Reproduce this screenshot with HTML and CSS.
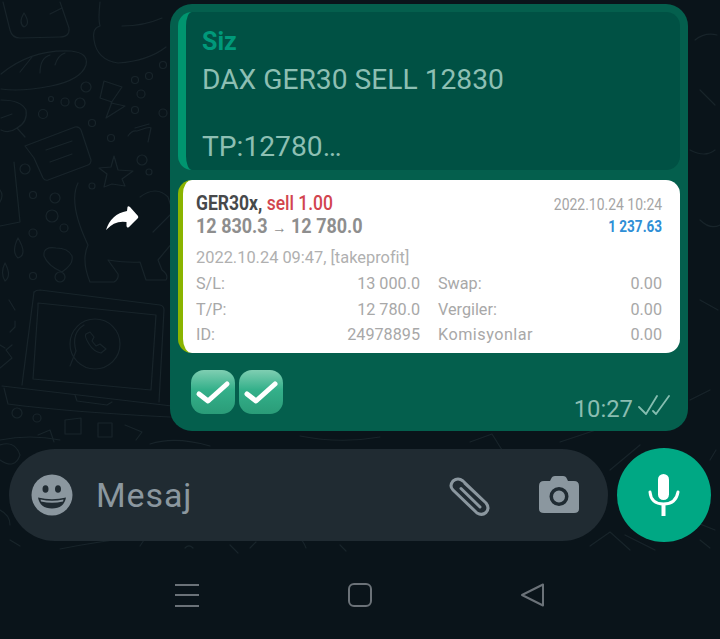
FILE: index.html
```html
<!DOCTYPE html>
<html lang="tr">
<head>
<meta charset="utf-8">
<title>Mesaj</title>
<link rel="stylesheet" href="styles.css">
</head>
<body>
<div class="screen">
  <svg class="doodles" width="720" height="560" viewBox="0 0 720 560" fill="none" stroke="#18242a" stroke-width="1.2" stroke-linecap="round" stroke-linejoin="round">
    <path d="M3 2l7 28q2 8 10 8l40-1q10 0 9-9L60 2"/><path d="M24 13q-6 10 0 14q7-3 0-14zM50 14l12-6"/>
    <path d="M100 2q-2 18 0 24q-8 2-6 14q3 20 24 23q30-2 48-16"/><path d="M122 26q22 0 40-8"/>
    <path d="M1 74q30-25 70-23q18 2 15 14q-5 15-35 21q-30 6-50 3"/><path d="M20 72l12-15M40 73q0-15 10-18M55 65q3-10 10-12"/>
    <circle cx="86" cy="87" r="5"/><circle cx="65" cy="102" r="4"/><circle cx="80" cy="103" r="5"/><circle cx="43" cy="114" r="4.500"/><circle cx="51" cy="99" r="2.500"/>
    <path d="M104 81l18 6-11 16 14 3-19 12 6-16-12-4z"/>
    <circle cx="135" cy="80" r="3.500"/><circle cx="149" cy="76" r="3.500"/><circle cx="141" cy="94" r="4"/><circle cx="135" cy="110" r="3.500"/><circle cx="163" cy="65" r="3.500"/><circle cx="163" cy="113" r="4"/>
    <path d="M1 100q20 0 25 10q2 12-9 18l8 9M17 128q-8 6-16 2M1 118l11-4"/>
    <path d="M25 146l50-19q4-1 6 3l10 30q0 4-3 5l-40 15q-3 1-5-2l-9-20z"/><path d="M46 150l26-9M50 162l22-8"/>
    <circle cx="92" cy="123" r="3.500"/><circle cx="111" cy="138" r="3.500"/><circle cx="142" cy="160" r="5"/><circle cx="149" cy="172" r="3"/>
    <path d="M128 136q4-6 9-5l9-3q4-1 5 0l-3 14M135 128l14-4"/>
    <path d="M114 156l4 14 15 1-11 8 3 7-13-2-8 3 3-13-8-6 12-1z"/>
    <circle cx="25" cy="169" r="5"/><circle cx="33" cy="195" r="3.500"/><circle cx="55" cy="198" r="5"/><circle cx="52" cy="216" r="6"/><circle cx="64" cy="228" r="4"/><circle cx="33" cy="233" r="4"/><circle cx="33" cy="276" r="3.500"/><circle cx="60" cy="277" r="5"/><circle cx="92" cy="186" r="3"/>
    <path d="M0 226l20-4-6-60"/><path d="M0 190q4 5 0 12"/>
    <path d="M18 238q-7 14 0 20q10-3 0-20zM5 263q-5 10 0 18q7-5 0-18z"/>
    <path d="M56 248q-13-2-12 8q4 10 18 16q12-8 10-16q-4-8-16-8z"/>
    <path d="M78 183q-10 20 10 62q-7 15 2 37h24q5-3 4-8l-10-14q20 3 32 2l6 18h20q3-5-4-10l-4-10 20-24"/>
    <path d="M140 197q16-12 28 0l5 15-20 20"/>
    <path d="M34 292q2-2 6-2l120 15q4 1 4 5l-5 92"/><path d="M22 385l12-93"/><path d="M38 303l118 12-5 75-118-11 5-72z"/>
    <circle cx="95" cy="344" r="25"/><path d="M70 366l6-15q-5-18 8-26"/><path d="M86 334q-2 2 3 10q5 8 12 9l5-4-6-5-4 2-4-5 2-4-4-5z"/>
    <path d="M4 388l4 16q60 8 162 13M75 395l2 6 30 4 5-3M2 386l170 20"/>
    <circle cx="17" cy="413" r="5"/><circle cx="37" cy="418" r="4"/><path d="M65 420v14h16v-16zM98 423v14h14v-14zM125 425l17 7-6 8M38 435l12-5 4 12"/>
    <path d="M15 310l-6-10M10 332l5-5v-6M12 345l-6 5 6 8-12 10M0 345l5 3"/>
    <path d="M0 460q15 10 20-5q-5-15-20-10M0 510q10 5 10 15M10 540l10 6M60 549q40-8 80-12M140 546l4-6M185 548q4-4 8 0M230 545l8 8M250 548l6-6M290 540q10-8 16 8M340 545l6 6"/>
    <path d="M470 442l22-8 10 16M560 442l45-15M610 470l30-25M625 535l30 15M590 546l20-14 20 18M690 520l25 10M700 540l10 8M716 450l-6 10"/>
    <path d="M0 440q30-6 60 0M150 444q25-8 60 2M300 436q40 8 80 1"/>
    <path d="M690 150q15 8 25 0M700 300l18 10M695 40q10-8 22-5M700 90l15 15M690 400l20-10M700 220q10 10 20 5"/>
  </svg>

  <main class="chat">
    <div class="row">
      <div class="fwd">
        <svg width="34" height="28" viewBox="0 0 34 28"><path fill="#fff" d="M1 25Q6 9 22 6L22.500 2Q23 .5 25 2L33 11Q33.500 12.500 33 13L24 22Q22 23.500 21.500 21L21.500 17Q10 15 1 25Z"/></svg>
      </div>
      <article class="bubble">
        <div class="quote">
          <div class="quote-name">Siz</div>
          <div class="quote-text">DAX GER30 SELL 12830</div>
          <div class="quote-gap"></div>
          <div class="quote-text">TP:12780…</div>
        </div>
        <div class="report">
          <div class="rep-head">
            <div class="rep-main">
              <div class="rep-title"><span class="sym">GER30x,</span> <span class="sell">sell 1.00</span></div>
              <div class="rep-prices">12 830.3 <span class="arrow">→</span> 12 780.0</div>
            </div>
            <div class="rep-side">
              <div class="rep-date">2022.10.24 10:24</div>
              <div class="rep-profit">1 237.63</div>
            </div>
          </div>
          <div class="rep-open">2022.10.24 09:47, [takeprofit]</div>
          <div class="rep-grid">
            <span>S/L:</span><span class="num">13 000.0</span><span>Swap:</span><span class="num">0.00</span>
            <span>T/P:</span><span class="num">12 780.0</span><span>Vergiler:</span><span class="num">0.00</span>
            <span>ID:</span><span class="num">24978895</span><span class="wide">Komisyonlar</span><span class="num">0.00</span>
          </div>
        </div>
        <div class="foot">
          <div class="checks">
            <div class="check"><svg width="38" height="34" viewBox="0 0 38 34"><path d="M5 19l9 7L33 9" fill="none" stroke="#fff" stroke-width="5" stroke-linecap="round" stroke-linejoin="round"/></svg></div>
            <div class="check"><svg width="38" height="34" viewBox="0 0 38 34"><path d="M5 19l9 7L33 9" fill="none" stroke="#fff" stroke-width="5" stroke-linecap="round" stroke-linejoin="round"/></svg></div>
          </div>
          <div class="meta">
            <span>10:27</span>
            <svg width="32" height="22" viewBox="0 0 32 22" fill="none" stroke="#86bdb0" stroke-width="1.800" stroke-linecap="round" stroke-linejoin="round"><path d="M1 13l7 7L19 2"/><path d="M15 17l3 3L31 2"/></svg>
          </div>
        </div>
      </article>
    </div>
  </main>

  <section class="composer">
    <div class="input">
      <svg class="smile" width="42" height="42" viewBox="0 0 42 42"><circle cx="21" cy="21" r="20.500" fill="#8b979f"/><ellipse cx="14.500" cy="15" rx="3" ry="3.800" fill="#202b32"/><ellipse cx="27" cy="15" rx="3" ry="3.800" fill="#202b32"/><path d="M7 23.500Q21 27 35 23.500Q33 34.500 21 34.500Q9 34.500 7 23.500Z" fill="#202b32"/><path d="M9.500 25.500Q21 28 32.500 25.500L32 27.500Q21 30 10 27.500Z" fill="#8b979f"/></svg>
      <span class="placeholder">Mesaj</span>
      <svg class="clip" width="44" height="42" viewBox="0 0 44 42" fill="none" stroke="#8b979f" stroke-width="3" stroke-linecap="round" stroke-linejoin="round"><path d="M38 27L15 5Q10 1 5 5Q1 10 5 14L29 37Q34 40 38 36.500Q42 32 38 27L17 7.500M13 12.500L32 31"/></svg>
      <svg class="cam" width="40" height="38" viewBox="0 0 40 38"><path fill-rule="evenodd" fill="#8b979f" d="M12 3Q13 0 16 0H24Q27 0 28 3L29 5H35Q40 5 40 10V33Q40 37 35 37H5Q0 37 0 33V10Q0 5 5 5H11ZM20 11A9.500 9.500 0 1 0 20 30A9.500 9.500 0 1 0 20 11ZM20 14.500A6 6 0 1 1 20 26.500A6 6 0 1 1 20 14.500Z"/></svg>
    </div>
    <button class="mic" type="button">
      <svg width="32" height="42" viewBox="0 0 32 42"><rect x="10" y="0" width="11" height="26" rx="5.500" fill="#fff"/><path d="M2 18Q3 30 15.500 30Q28 30 30 18" fill="none" stroke="#fff" stroke-width="3" stroke-linecap="round"/><rect x="13.500" y="30" width="4" height="12" fill="#fff"/></svg>
    </button>
  </section>

  <nav class="navbar">
    <svg width="26" height="24" viewBox="0 0 26 24" stroke="#6b7278" stroke-width="2"><path d="M1 2H25M1 12H25M1 23H25"/></svg>
    <svg width="26" height="24" viewBox="0 0 26 24" fill="none" stroke="#6b7278" stroke-width="2"><rect x="2" y="1" width="22" height="22" rx="5"/></svg>
    <svg width="26" height="24" viewBox="0 0 26 24" fill="none" stroke="#6b7278" stroke-width="2" stroke-linejoin="round"><path d="M2 12L23 1.500V22.500Z"/></svg>
  </nav>
</div>
</body>
</html>
```

FILE: styles.css
```css
* { box-sizing: border-box; }
html, body { margin: 0; padding: 0; }
body { background: #0a141a; font-family: Roboto, "Liberation Sans", sans-serif; }

.screen {
  position: relative;
  width: 720px;
  height: 639px;
  overflow: hidden;
  background: #0a141a;
  display: flex;
  flex-direction: column;
}
.doodles { position: absolute; left: 0; top: 0; }

.chat { position: relative; padding: 4px 32px 0 0; height: 448px; }
.row { display: flex; }
.fwd { width: 170px; height: 427px; padding: 201px 0 0 105px; }
.fwd svg { display: block; }

.bubble {
  width: 518px;
  height: 427px;
  padding: 8px;
  border-radius: 22px;
  background: #045f4d;
  display: flex;
  flex-direction: column;
}

.quote {
  flex: none;
  height: 158px;
  padding: 12px 16px 0 16px;
  background: #005144;
  border-left: 8px solid #00956f;
  border-radius: 14px;
}
.quote-name { font-size: 25px; font-weight: 700; line-height: 36px; color: #00997a; }
.quote-text { font-size: 28.200px; line-height: 38px; color: #8dbfb3; margin-top: 1px; }
.quote-gap { height: 28px; }

.report {
  flex: none;
  margin-top: 10px;
  height: 173px;
  padding: 12px 18px 0 13px;
  background: #fff;
  border-left: 5px solid #8ab400;
  border-radius: 14px;
  color: #a8a8a8;
}
.rep-head { display: flex; justify-content: space-between; }
.rep-title, .rep-prices { font-weight: 700; font-size: 20px; line-height: 23px; transform-origin: left center; }
.rep-title { transform: scaleX(.875); width: 160px; white-space: nowrap; }
.rep-prices { transform: scaleX(.9); width: 190px; white-space: nowrap; color: #8e8e8e; }
.sym { color: #47494b; }
.sell { color: #d2454e; font-weight: 500; }
.arrow { font-weight: 400; font-size: 16px; }
.rep-side { text-align: right; padding-top: 3px; }
.rep-date { font-size: 16.500px; line-height: 20px; color: #a5a5a5; transform: scaleX(.845); transform-origin: right center; white-space: nowrap; }
.rep-profit { font-weight: 700; font-size: 16.500px; line-height: 23px; color: #2f8fd6; transform: scaleX(.82); transform-origin: right center; }
.rep-open { font-size: 16.400px; line-height: 20px; margin-top: 9px; color: #b0b0b0; }
.rep-grid {
  display: grid;
  grid-template-columns: 150px 74px 1fr 60px;
  margin-top: 3px;
  line-height: 25.500px;
  font-size: 16.200px;
}
.rep-grid span:nth-child(4n+3) { padding-left: 18px; }
.num { text-align: right; }
.wide { letter-spacing: .5px; white-space: nowrap; }

.foot { flex: 1; display: flex; justify-content: space-between; padding: 17px 10px 0 13px; }
.checks { display: flex; gap: 4px; }
.check {
  width: 44px;
  height: 44px;
  border-radius: 13px;
  background: linear-gradient(#7fceb2, #34b08a 45%, #2a9c78);
  display: flex;
  align-items: center;
  justify-content: center;
}
.meta { display: flex; align-items: flex-start; gap: 5px; padding-top: 25px; color: #8bbdb1; font-size: 23.800px; line-height: 28px; }
.meta svg { margin-top: -1px; }

.composer { position: relative; display: flex; align-items: center; padding: 0 9px 0 9px; height: 94px; gap: 9px; }
.input {
  width: 599px;
  height: 92px;
  border-radius: 46px;
  background: #202b32;
  display: flex;
  align-items: center;
  padding: 0 29px 0 22px;
}
.smile { flex: none; }
.placeholder { margin-left: 23px; flex: 1; font-size: 34px; letter-spacing: .9px; color: #8b979f; }
.clip { flex: none; margin-right: 47px; margin-top: 3px; }
.cam { flex: none; }
.mic {
  width: 94px;
  height: 94px;
  padding: 0;
  border: 0;
  border-radius: 50%;
  background: #00a884;
  display: flex;
  align-items: center;
  justify-content: center;
}

.navbar {
  position: relative;
  flex: 1;
  display: flex;
  justify-content: center;
  align-items: flex-start;
  gap: 147px;
  padding-top: 41px;
}
```
